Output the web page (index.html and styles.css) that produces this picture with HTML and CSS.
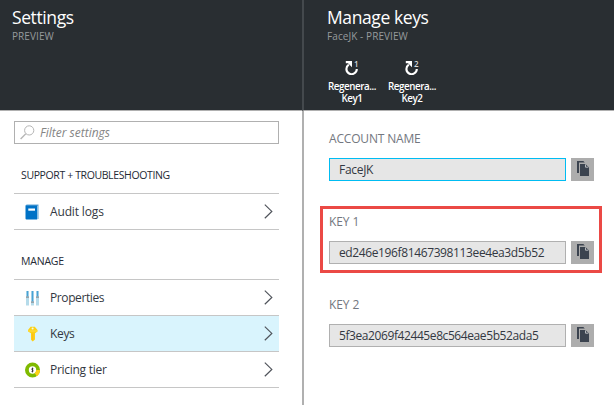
FILE: index.html
```html
<!DOCTYPE html>
<html lang="en">
<head>
<meta charset="utf-8">
<title>Manage keys</title>
<link rel="stylesheet" href="styles.css">
</head>
<body>
<svg class="defs" width="0" height="0">
  <symbol id="chevron" viewBox="0 0 9 15"><path d="M.8.6 7.8 7.4.8 14.3" fill="none" stroke="#50545b" stroke-width="1.2"/></symbol>
  <symbol id="copy" viewBox="0 0 12 15"><path d="M0 0h6.3l1.5 1.5H2V12H0z" fill="#3b434f"/><path d="M3 3h5.4L12 6.4V15H3z" fill="#3b434f"/><path d="M8.5 3.4v2.8h2.8" fill="none" stroke="#c5c7c9" stroke-width=".9"/></symbol>
  <symbol id="regen" viewBox="0 0 14 14"><path d="M3.8 3.6A5.2 5.2 0 1 0 11.8 8" fill="none" stroke="#fff" stroke-width="2.1"/><path d="M.8 0H7v6.2L4.8 4.1 3 2.3H.8z" fill="#fff"/></symbol>
</svg>
<div class="portal">
  <section class="blade settings">
    <header class="blade-head">
      <h1>Settings</h1>
      <p class="sub">PREVIEW</p>
    </header>
    <div class="blade-body">
      <div class="filter">
        <svg width="15" height="15" viewBox="0 0 15 15"><circle cx="9.2" cy="5.4" r="4.6" fill="none" stroke="#b5b5b5"/><path d="M5.8 8.8.6 14" stroke="#b5b5b5" stroke-width="1.3"/></svg>
        <span>Filter settings</span>
      </div>
      <h2 class="group"><span class="t-support">SUPPORT + TROUBLESHOOTING</span></h2>
      <ul class="list">
        <li><svg class="icon" width="16" height="16" viewBox="0 0 16 16"><path d="M2.5.5h12V15h-1V2h-12z" fill="#62a5d6"/><path d="M1.5 1.5h11.7v14H2.5q-1 0-1-1z" fill="#0072c6"/><path d="M4.3 4.5H11v2.2H4.3z" fill="#fff"/></svg><span class="t-audit">Audit logs</span><svg class="chev" width="9" height="15"><use href="#chevron"/></svg></li>
      </ul>
      <h2 class="group"><span class="t-manage">MANAGE</span></h2>
      <ul class="list">
        <li><svg class="icon" width="16" height="16" viewBox="0 0 16 16"><path d="M2 1h3v14.5H2zM7 1h3v14.5H7zM12 1h3v14.5h-3z" fill="#b5dbea"/><path d="M2.8 1h1.4v5.5H2.8zM7.8 1h1.4v10.5H7.8zM12.8 1h1.4v5.5h-1.4z" fill="#48a2d6"/><path d="M2 6.5h3v1.2H2zM7 11.5h3v1.2H7zM12 6.5h3v1.2h-3z" fill="#8a9298"/></svg><span class="t-props">Properties</span><svg class="chev" width="9" height="15"><use href="#chevron"/></svg></li>
        <li class="active"><svg class="icon" width="16" height="16" viewBox="0 0 16 16"><path d="M6.6.8h4.2l2.7 3.2v1.4L11 7.2v6.3L8.7 15.4 7 13.8V7.2L4 5.4V4z" fill="#fcd116"/><circle cx="8.6" cy="2.4" r="1" fill="#eefaf4"/><path d="M4.2 5h9.1" stroke="#ffe04d"/><path d="M8.7 7.5v6.5" stroke="#ffb520" stroke-width=".9"/></svg><span class="t-keys">Keys</span><svg class="chev" width="9" height="15"><use href="#chevron"/></svg></li>
        <li><svg class="icon" width="16" height="16" viewBox="0 0 16 16"><circle cx="8.5" cy="8" r="5.6" fill="none" stroke="#7fba00" stroke-width="3.8"/><path d="M14.1 8a5.6 5.6 0 0 1-2.4 4.6" fill="none" stroke="#fcd116" stroke-width="3.8"/><path d="M9.4 6.8Q7.4 6.2 7.7 7.4L9.2 8.6q.3 1.3-1.7.8M8.5 5.6v4.8" fill="none" stroke="#333" stroke-width=".9"/></svg><span class="t-tier">Pricing tier</span><svg class="chev" width="9" height="15"><use href="#chevron"/></svg></li>
      </ul>
    </div>
  </section>
  <section class="blade keys">
    <header class="blade-head">
      <h1>Manage keys</h1>
      <p class="sub">FaceJK - PREVIEW</p>
      <div class="commands">
        <button class="cmd"><span class="cmd-icon"><svg width="14" height="14"><use href="#regen"/></svg><sup>1</sup></span><span>Regenera...</span><span>Key1</span></button>
        <button class="cmd"><span class="cmd-icon"><svg width="14" height="14"><use href="#regen"/></svg><sup>2</sup></span><span>Regenera...</span><span>Key2</span></button>
      </div>
    </header>
    <div class="blade-body">
      <div class="field">
        <label class="t-account">ACCOUNT NAME</label>
        <div class="row"><div class="value focus"><span class="t-face">FaceJK</span></div><button class="copy"><svg width="12" height="15"><use href="#copy"/></svg></button></div>
      </div>
      <div class="field marked">
        <label>KEY 1</label>
        <div class="row"><div class="value"><span class="t-hash">ed246e196f81467398113ee4ea3d5b52</span></div><button class="copy"><svg width="12" height="15"><use href="#copy"/></svg></button></div>
      </div>
      <div class="field">
        <label>KEY 2</label>
        <div class="row"><div class="value"><span class="t-hash second">5f3ea2069f42445e8c564eae5b52ada5</span></div><button class="copy"><svg width="12" height="15"><use href="#copy"/></svg></button></div>
      </div>
    </div>
  </section>
</div>
</body>
</html>
```
FILE: styles.css
```css
* { box-sizing: border-box; margin: 0; padding: 0; }
body { width: 614px; height: 405px; overflow: hidden; background: #fff; font-family: "Open Sans", "Noto Sans", sans-serif; font-size: 12px; color: #333842; }
.defs { position: absolute; }
button { border: 0; background: none; font: inherit; color: inherit; }
span, h1, p { white-space: nowrap; }
.portal { display: flex; height: 405px; }
.settings { width: 302px; flex: none; }
.keys { flex: 1; }
.blade-head { height: 111px; background: #292e32; border-bottom: 1px solid #b0b0b0; padding: 6px 12px 0; color: #fff; }
.keys .blade-head { border-left: 2px solid #44494d; padding-left: 23px; }
h1 { font-size: 17.5px; font-weight: 400; line-height: 22px; letter-spacing: -.4px; }
.sub { font-size: 10px; line-height: 14px; margin-top: 1px; color: #969a9c; letter-spacing: .08px; }
.commands { display: flex; gap: 12px; margin: 17px 0 0 1px; }
.cmd { width: 48px; display: flex; flex-direction: column; align-items: center; font-size: 9.8px; line-height: 12px; letter-spacing: -.42px; font-weight: 600; }
.cmd-icon { display: flex; height: 20px; width: 14px; margin: 1px 0 0; }
.cmd-icon svg { flex: none; }
.cmd-icon sup { font-size: 8px; line-height: 8px; margin: -1px 0 0 -5px; font-weight: 600; color: #d5d7d8; }
.settings .blade-body { padding: 10px 23px 0 14px; }
.filter { height: 23px; border: 1px solid #b0b0b0; display: flex; align-items: center; gap: 5px; padding-left: 5px; font-style: italic; color: #858585; }
.group { font-size: 10.5px; font-weight: 400; padding-left: 7px; line-height: 14px; color: #252a35; margin: 24px 0 11px; }
.list { list-style: none; border-bottom: 1px solid #c6c6c6; }
.list li { height: 36px; border-top: 1px solid #c6c6c6; display: flex; align-items: center; padding: 0 6px 0 10px; }
.list .icon { margin-right: 10px; }
.list .chev { margin-left: auto; }
.active { background: #d9f4fd; }
.keys .blade-body { border-left: 2px solid #b0b0b0; height: 294px; padding: 12px 0 0 16px; }
.field { width: 282px; height: 67px; border: 3px solid transparent; padding: 6px 5px 0 6px; margin-bottom: 16px; }
.marked { border-color: #eb4945; }
label { display: block; font-size: 12px; line-height: 14px; height: 26px; color: #737780; letter-spacing: -.1px; }
.row { display: flex; gap: 5px; }
.value { flex: 1; height: 23px; border: 1px solid #b0b0b0; background: #e6e6e6; line-height: 21px; padding-left: 9px; }
.focus { border-color: #00bcf2; }
.copy { flex: none; width: 23px; height: 23px; background: #adadad; display: flex; align-items: center; justify-content: center; }
.copy svg { margin: -2px 0 0 1px; }
.t-support { letter-spacing: -.38px; }
.t-manage { letter-spacing: -.2px; }
.t-audit { letter-spacing: -.15px; }
.t-props { letter-spacing: -.4px; }
.t-keys { letter-spacing: -.35px; }
.t-tier { letter-spacing: -.28px; }
.t-account { letter-spacing: -.17px; }
.t-face { letter-spacing: -.3px; }
.t-hash { letter-spacing: -.38px; }
.t-hash.second { letter-spacing: -.41px; }
```
